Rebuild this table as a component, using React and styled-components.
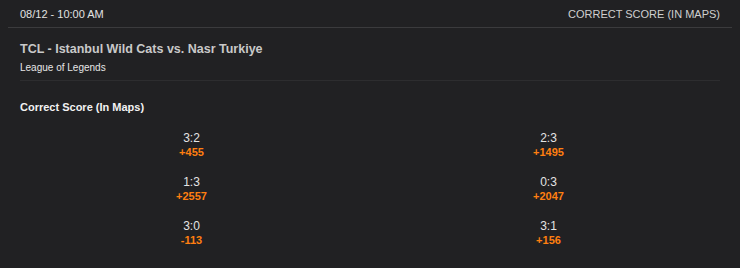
import React from "react";
import styled, { createGlobalStyle } from "styled-components";

const Global = createGlobalStyle`
  html, body { margin: 0; padding: 0; background: #212123; }
  body { font-family: "Liberation Sans", Arial, sans-serif; }
`;

const Page = styled.div`
  width: 740px;
  height: 268px;
  background: #212123;
  box-sizing: border-box;
  overflow: hidden;
`;

const Header = styled.div`
  margin: 0 8px;
  height: 27px;
  padding: 0 12px;
  display: flex;
  align-items: center;
  justify-content: space-between;
  border-bottom: 1px solid #3b3b3d;
  font-size: 11px;
  color: #e2e2e2;
`;

const HeaderRight = styled.span`
  color: #cfcfcf;
`;

const Body = styled.div`
  padding: 0 20px;
`;

const Title = styled.div`
  margin-top: 13px;
  font-size: 12.5px;
  line-height: 16px;
  font-weight: bold;
  color: #c9c9c9;
`;

const Subtitle = styled.div`
  margin-top: 4px;
  font-size: 10px;
  line-height: 14px;
  color: #e6e6e6;
`;

const Divider = styled.div`
  margin-top: 5px;
  height: 1px;
  background: #2d2d2f;
`;

const Section = styled.div`
  margin-top: 19px;
  font-size: 11px;
  line-height: 14px;
  font-weight: bold;
  color: #f2f2f2;
`;

const Grid = styled.div`
  margin: 17px -7px 0;
  display: grid;
  grid-template-columns: 1fr 1fr;
  row-gap: 16px;
`;

const Cell = styled.div`
  display: flex;
  flex-direction: column;
  align-items: center;
  line-height: 14px;
`;

const Score = styled.span`
  font-size: 12px;
  color: #e4e4e4;
`;

const Odds = styled.span`
  font-size: 11px;
  color: #ff7f10;
  font-weight: bold;
`;

const outcomes = [
  ["3:2", "+455"],
  ["2:3", "+1495"],
  ["1:3", "+2557"],
  ["0:3", "+2047"],
  ["3:0", "-113"],
  ["3:1", "+156"],
];

export default function App() {
  return (
    <Page>
      <Global />
      <Header>
        <span>08/12 - 10:00 AM</span>
        <HeaderRight>CORRECT SCORE (IN MAPS)</HeaderRight>
      </Header>
      <Body>
        <Title>TCL - Istanbul Wild Cats vs. Nasr Turkiye</Title>
        <Subtitle>League of Legends</Subtitle>
        <Divider />
        <Section>Correct Score (In Maps)</Section>
        <Grid>
          {outcomes.map(([s, o]) => (
            <Cell key={s}>
              <Score>{s}</Score>
              <Odds>{o}</Odds>
            </Cell>
          ))}
        </Grid>
      </Body>
    </Page>
  );
}
